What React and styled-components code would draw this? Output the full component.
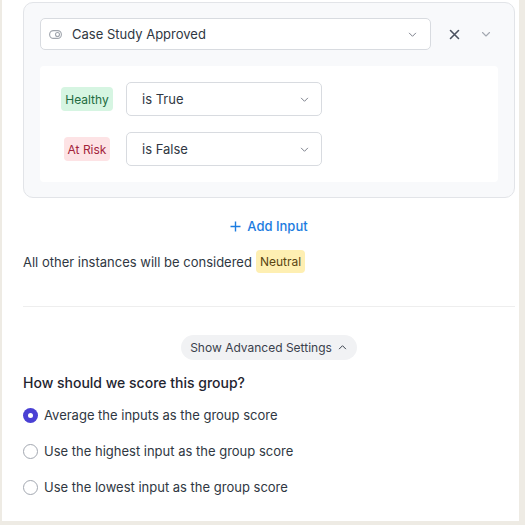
import React from 'react'
import styled, { createGlobalStyle } from 'styled-components'

const GlobalStyle = createGlobalStyle`
    html, body {
        margin: 0;
        padding: 0;
        background: #eeebe4;
    }
    body {
        font-family: Inter, "Noto Sans", sans-serif;
        color: #374151;
    }
`

const Panel = styled.div`
    box-sizing: border-box;
    width: 517px;
    height: 521px;
    margin-left: 2px;
    background: #ffffff;
    padding: 2px 4px 0 21px;
    overflow: hidden;
`

const Card = styled.div`
    border: 1px solid #e2e4e8;
    border-radius: 10px;
    background: #f8f9fb;
    padding: 15px 16px 15px 16px;
`

const HeaderRow = styled.div`
    display: flex;
    align-items: center;
`

const Select = styled.div`
    box-sizing: border-box;
    display: flex;
    align-items: center;
    flex: ${p => (p.grow ? 1 : 'none')};
    width: ${p => p.width || 'auto'};
    height: ${p => p.height || 32}px;
    padding: 0 ${p => p.padRight || 13}px 0 ${p => p.padLeft || 8}px;
    background: #ffffff;
    border: 1px solid #d8dbe0;
    border-radius: 5px;
    font-size: 13px;
    color: #2f3742;
`

const SelectText = styled.span`
    flex: 1;
    margin-left: ${p => p.gap || 0}px;
`

const IconButton = styled.span`
    display: inline-flex;
    align-items: center;
    justify-content: center;
    width: 12px;
    height: 12px;
    margin-left: ${p => p.gap}px;
`

const Rules = styled.div`
    margin-top: 16px;
    background: #ffffff;
    border-radius: 4px;
    padding: 16px 0 16px 16px;
    display: flex;
    flex-direction: column;
    gap: 16px;
`

const RuleRow = styled.div`
    display: flex;
    align-items: center;
`

const LabelCell = styled.div`
    width: 62px;
    display: flex;
    justify-content: center;
    margin-right: 8px;
`

const Badge = styled.span`
    display: inline-flex;
    align-items: center;
    height: ${p => p.height || 24}px;
    padding: 0 ${p => p.pad || 4}px;
    border-radius: 4px;
    font-size: 12px;
    background: ${p => p.bg};
    color: ${p => p.fg};
`

const AddInput = styled.div`
    margin-top: 18px;
    height: 20px;
    display: flex;
    align-items: center;
    justify-content: center;
    gap: 6px;
    color: #1c7ce0;
    font-size: 13px;
    font-weight: 500;
`

const NoteRow = styled.div`
    margin-top: 14px;
    display: flex;
    align-items: center;
    gap: 4px;
    font-size: 13px;
    color: #2f3742;
`

const Divider = styled.hr`
    margin: 33px 0 0 0;
    border: none;
    border-top: 1px solid #eeeeee;
`

const PillWrap = styled.div`
    margin-top: 28px;
    display: flex;
    justify-content: center;
`

const Pill = styled.div`
    display: inline-flex;
    align-items: center;
    gap: 6px;
    height: 25px;
    padding: 0 10px 0 9px;
    border-radius: 13px;
    background: #f1f2f4;
    font-size: 12px;
    color: #3a414c;
`

const Heading = styled.div`
    margin-top: 13px;
    height: 20px;
    line-height: 20px;
    font-size: 14px;
    font-weight: 500;
    color: #1f2530;
`

const RadioList = styled.div`
    margin-top: 12px;
    display: flex;
    flex-direction: column;
    gap: 16px;
`

const RadioRow = styled.label`
    display: flex;
    align-items: center;
    gap: 6px;
    height: 20px;
    font-size: 13px;
    color: #2f3742;
`

const RadioDot = styled.span`
    box-sizing: border-box;
    width: 15px;
    height: 15px;
    border-radius: 50%;
    display: inline-flex;
    align-items: center;
    justify-content: center;
    border: ${p => (p.checked ? 'none' : '1px solid #a3a8b1')};
    background: ${p => (p.checked ? '#4a40d4' : '#ffffff')};

    &::after {
        content: '';
        display: ${p => (p.checked ? 'block' : 'none')};
        width: 5px;
        height: 5px;
        border-radius: 50%;
        background: #ffffff;
    }
`

const Chevron = ({ color = '#6b7280', dir = 'down', size = 9 }) => (
    <svg width={size} height={size} viewBox="0 0 10 10" fill="none">
        <path
            d={dir === 'down' ? 'M1.5 3.5L5 7L8.5 3.5' : 'M1.5 6.5L5 3L8.5 6.5'}
            stroke={color}
            strokeWidth="1.1"
            strokeLinecap="round"
            strokeLinejoin="round"
        />
    </svg>
)

const ToggleIcon = () => (
    <svg width="13" height="9" viewBox="0 0 13 9" fill="none">
        <rect x="0.6" y="0.6" width="11.8" height="7.8" rx="3.9" stroke="#a0a5ad" strokeWidth="1.1" />
        <circle cx="8.5" cy="4.5" r="2" stroke="#a0a5ad" strokeWidth="1.1" />
    </svg>
)

const CloseIcon = () => (
    <svg width="11" height="11" viewBox="0 0 11 11" fill="none">
        <path d="M1.5 1.5L9.5 9.5M9.5 1.5L1.5 9.5" stroke="#4b5260" strokeWidth="1.6" strokeLinecap="round" />
    </svg>
)

const PlusIcon = () => (
    <svg width="11" height="11" viewBox="0 0 11 11" fill="none">
        <path d="M5.5 0.5V10.5M0.5 5.5H10.5" stroke="#1c7ce0" strokeWidth="1.4" />
    </svg>
)

const rules = [
    { label: 'Healthy', bg: '#d6f5e2', fg: '#226b40', value: 'is True' },
    { label: 'At Risk', bg: '#fde3e5', fg: '#a3243b', value: 'is False' },
]

const options = [
    'Average the inputs as the group score',
    'Use the highest input as the group score',
    'Use the lowest input as the group score',
]

function App() {
    return (
        <Panel>
            <GlobalStyle />
            <Card>
                <HeaderRow>
                    <Select grow>
                        <ToggleIcon />
                        <SelectText gap={10}>Case Study Approved</SelectText>
                        <Chevron color="#7b818c" />
                    </Select>
                    <IconButton gap={17}><CloseIcon /></IconButton>
                    <IconButton gap={20}><Chevron color="#a3a8b1" size={10} /></IconButton>
                    <span style={{ width: 6 }} />
                </HeaderRow>
                <Rules>
                    {rules.map(r => (
                        <RuleRow key={r.label}>
                            <LabelCell>
                                <Badge bg={r.bg} fg={r.fg}>{r.label}</Badge>
                            </LabelCell>
                            <Select width="196px" height={34} padLeft={15} padRight={12}>
                                <SelectText>{r.value}</SelectText>
                                <Chevron color="#7b818c" />
                            </Select>
                        </RuleRow>
                    ))}
                </Rules>
            </Card>
            <AddInput>
                <PlusIcon />
                Add Input
            </AddInput>
            <NoteRow>
                All other instances will be considered
                <Badge bg="#feefb2" fg="#5a4512" height={23} pad={4}>Neutral</Badge>
            </NoteRow>
            <Divider />
            <PillWrap>
                <Pill>
                    Show Advanced Settings
                    <Chevron dir="up" color="#3a414c" size={9} />
                </Pill>
            </PillWrap>
            <Heading>How should we score this group?</Heading>
            <RadioList>
                {options.map((o, i) => (
                    <RadioRow key={o}>
                        <RadioDot checked={i === 0} />
                        {o}
                    </RadioRow>
                ))}
            </RadioList>
        </Panel>
    )
}

export default App
